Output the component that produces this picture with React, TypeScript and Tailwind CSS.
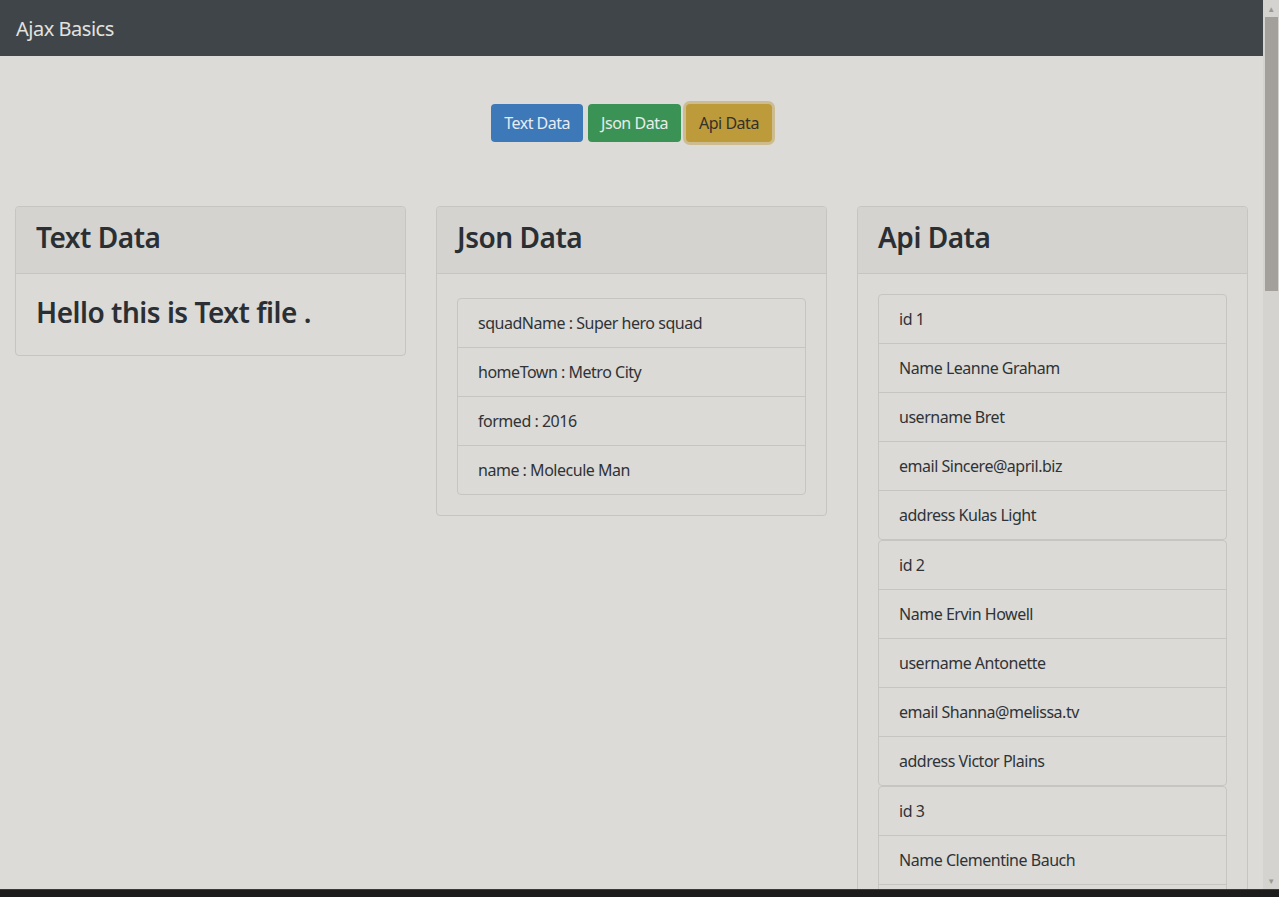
import React from "react"

const jsonItems = [
  "squadName : Super hero squad",
  "homeTown : Metro City",
  "formed : 2016",
  "name : Molecule Man",
]

const users = [
  { id: 1, name: "Leanne Graham", username: "Bret", email: "Sincere@april.biz", address: "Kulas Light" },
  { id: 2, name: "Ervin Howell", username: "Antonette", email: "Shanna@melissa.tv", address: "Victor Plains" },
  { id: 3, name: "Clementine Bauch", username: "Samantha", email: "Nathan@yesenia.net", address: "Douglas Extension" },
]

function Card({ title, children }: { title: string; children: React.ReactNode }) {
  return (
    <div className="border border-[#c6c5c1] rounded-[4px] bg-[#dbdad6]">
      <div className="bg-[#d4d3cf] border-b border-[#c6c5c1] rounded-t-[3px] px-5 pt-[14px] pb-[10px]">
        <h3 className="text-[28px] leading-[33.6px] font-semibold mb-2 text-[#2b2f34]">{title}</h3>
      </div>
      <div className="p-5">{children}</div>
    </div>
  )
}

function ListGroup({ items }: { items: string[] }) {
  return (
    <ul className="border border-[#c6c5c1] rounded-[4px]">
      {items.map((it, i) => (
        <li
          key={i}
          className={
            "px-5 py-3 leading-6 text-[16px] text-[#2f3337] " +
            (i > 0 ? "border-t border-[#c6c5c1]" : "")
          }
        >
          {it}
        </li>
      ))}
    </ul>
  )
}

export default function App() {
  return (
    <div
      className="h-[897px] flex flex-col overflow-hidden bg-[#dcdbd7] tracking-[-0.03em]"
      style={{ fontFamily: '"Noto Sans", "Open Sans", sans-serif' }}
    >
      <div className="flex-1 flex min-h-0">
        <div className="flex-1 min-w-0 overflow-hidden">
          {/* navbar */}
          <nav className="h-14 bg-[#3f4549] flex items-center px-4">
            <span className="text-[20px] text-[#e2e2e0] pt-[2px]">Ajax Basics</span>
          </nav>

          {/* buttons */}
          <div className="flex justify-center gap-[5px] mt-12 mb-16">
            <button className="h-[38px] px-[13px] rounded-[4px] bg-[#3d78b9] text-[#e8ecf0] text-[16px]">Text Data</button>
            <button className="h-[38px] px-[13px] rounded-[4px] bg-[#3a9354] text-[#e8ecea] text-[16px]">Json Data</button>
            <button className="h-[38px] px-[13px] rounded-[4px] bg-[#bd9a3a] text-[#34312b] text-[16px] shadow-[0_0_0_3px_rgba(200,178,120,0.75)]">
              Api Data
            </button>
          </div>

          {/* cards */}
          <div className="grid grid-cols-3 items-start">
            <div className="px-[15px]">
              <Card title="Text Data">
                <h3 className="text-[28px] leading-[33.6px] font-semibold pt-[2px] mb-[6px] text-[#2b2f34]">
                  Hello this is Text file .
                </h3>
              </Card>
            </div>
            <div className="px-[15px]">
              <Card title="Json Data">
                <div className="pt-1">
                  <ListGroup items={jsonItems} />
                </div>
              </Card>
            </div>
            <div className="px-[15px]">
              <Card title="Api Data">
                {users.map((u) => (
                  <ListGroup
                    key={u.id}
                    items={[
                      "id " + u.id,
                      "Name " + u.name,
                      "username " + u.username,
                      "email " + u.email,
                      "address " + u.address,
                    ]}
                  />
                ))}
              </Card>
            </div>
          </div>
        </div>

        {/* scrollbar */}
        <div className="w-4 bg-[#d4d3cf] flex flex-col items-center">
          <div className="h-[17px] flex items-center justify-center text-[8px] text-[#9c9893]">▲</div>
          <div className="w-[13px] h-[274px] bg-[#a39f9a]" />
          <div className="flex-1" />
          <div className="h-[17px] flex items-center justify-center text-[8px] text-[#9c9893]">▼</div>
        </div>
      </div>
      <div className="h-2 bg-[#1d1d1d] border-t border-[#3a3a3a]" />
    </div>
  )
}
